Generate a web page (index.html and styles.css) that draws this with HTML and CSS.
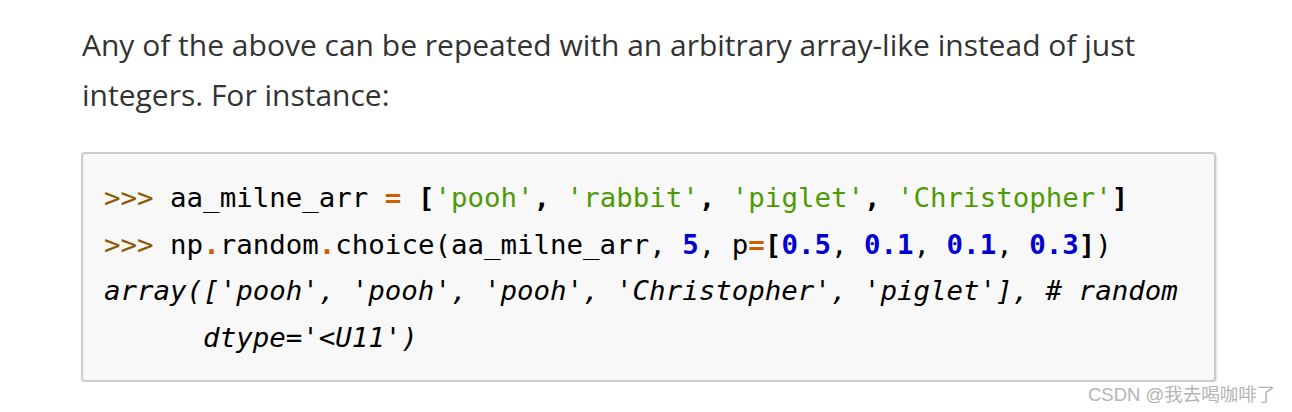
FILE: index.html
```html
<!DOCTYPE html>
<html>
<head>
<meta charset="utf-8">
<link rel="stylesheet" href="styles.css">
</head>
<body>
<div class="page">
  <p class="para">Any of the above can be repeated with an arbitrary array-like instead of just integers. For instance:</p>
  <pre class="code"><span class="gp">&gt;&gt;&gt; </span>aa_milne_arr <span class="o">=</span> <span class="p">[</span><span class="s">'pooh'</span><span class="p">,</span> <span class="s">'rabbit'</span><span class="p">,</span> <span class="s">'piglet'</span><span class="p">,</span> <span class="s">'Christopher'</span><span class="p">]</span>
<span class="gp">&gt;&gt;&gt; </span>np<span class="o">.</span>random<span class="o">.</span>choice(aa_milne_arr, <span class="m">5</span>, p<span class="o">=</span><span class="p">[</span><span class="m">0.5</span>, <span class="m">0.1</span>, <span class="m">0.1</span>, <span class="m">0.3</span><span class="p">]</span>)
<span class="go">array(['pooh', 'pooh', 'pooh', 'Christopher', 'piglet'], # random
      dtype='&lt;U11')</span></pre>
</div>
<div class="watermark">CSDN @我去喝咖啡了</div>
</body>
</html>
```
FILE: styles.css
```css
html, body {
  margin: 0;
  padding: 0;
  background: #ffffff;
}
.page {
  padding: 20px 0 0 82px;
  width: 1135px;
}
.para {
  margin: 0;
  font-family: "Open Sans", sans-serif;
  font-size: 30px;
  line-height: 50px;
  color: #333333;
  width: 1100px;
}
.code {
  margin: 32px 0 0 -1px;
  box-sizing: border-box;
  width: 1135px;
  height: 230px;
  padding: 21px 20px 0 21px;
  background: #f8f8f8;
  border: 2px solid #cccccc;
  border-radius: 4px;
  box-shadow: 1px 1px 2px rgba(0,0,0,0.12);
  font-family: "DejaVu Sans Mono", monospace;
  font-size: 27.45px;
  line-height: 46.7px;
  color: #000000;
  white-space: pre;
}
.gp { color: #8f5902; }
.o { color: #ce5c00; font-weight: bold; }
.p { font-weight: bold; }
.s { color: #4e9a06; }
.m { color: #0000cf; font-weight: bold; }
.go { font-style: italic; color: #000000; }
.watermark {
  position: absolute;
  left: 1088px;
  top: 380px;
  font-family: "Liberation Sans", "Noto Sans CJK SC", sans-serif;
  font-size: 18.5px;
  color: #b5b5b5;
}
```
